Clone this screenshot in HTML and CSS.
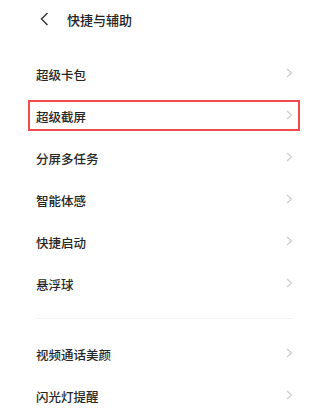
FILE: index.html
```html
<!DOCTYPE html>
<html lang="zh-CN">
<head>
  <meta charset="UTF-8">
  <meta name="viewport" content="width=device-width, initial-scale=1.0">
  <title>快捷与辅助</title>
  <link rel="stylesheet" href="styles.css">
</head>
<body>
  <div class="header">
    <svg class="back" width="9" height="14" viewBox="0 0 9 14">
      <polyline points="7.5,1 1.5,7 7.5,13" fill="none" stroke="#333" stroke-width="1.4"/>
    </svg>
    <span class="title">快捷与辅助</span>
  </div>
  <div class="list">
    <div class="row"><span>超级卡包</span><svg class="arrow" width="7" height="10" viewBox="0 0 7 10"><polyline points="1,1 5.5,5 1,9" fill="none" stroke="#cfcfcf" stroke-width="1.2"/></svg></div>
    <div class="row marked"><span>超级截屏</span><svg class="arrow" width="7" height="10" viewBox="0 0 7 10"><polyline points="1,1 5.5,5 1,9" fill="none" stroke="#cfcfcf" stroke-width="1.2"/></svg></div>
    <div class="row"><span>分屏多任务</span><svg class="arrow" width="7" height="10" viewBox="0 0 7 10"><polyline points="1,1 5.5,5 1,9" fill="none" stroke="#cfcfcf" stroke-width="1.2"/></svg></div>
    <div class="row"><span>智能体感</span><svg class="arrow" width="7" height="10" viewBox="0 0 7 10"><polyline points="1,1 5.5,5 1,9" fill="none" stroke="#cfcfcf" stroke-width="1.2"/></svg></div>
    <div class="row"><span>快捷启动</span><svg class="arrow" width="7" height="10" viewBox="0 0 7 10"><polyline points="1,1 5.5,5 1,9" fill="none" stroke="#cfcfcf" stroke-width="1.2"/></svg></div>
    <div class="row"><span>悬浮球</span><svg class="arrow" width="7" height="10" viewBox="0 0 7 10"><polyline points="1,1 5.5,5 1,9" fill="none" stroke="#cfcfcf" stroke-width="1.2"/></svg></div>
    <div class="divider"></div>
    <div class="row"><span>视频通话美颜</span><svg class="arrow" width="7" height="10" viewBox="0 0 7 10"><polyline points="1,1 5.5,5 1,9" fill="none" stroke="#cfcfcf" stroke-width="1.2"/></svg></div>
    <div class="row"><span>闪光灯提醒</span><svg class="arrow" width="7" height="10" viewBox="0 0 7 10"><polyline points="1,1 5.5,5 1,9" fill="none" stroke="#cfcfcf" stroke-width="1.2"/></svg></div>
  </div>
</body>
</html>
```

FILE: styles.css
```css
body {
  margin: 0;
  background-color: #fff;
  font-family: "Noto Sans CJK SC", "Noto Sans", sans-serif;
  color: #262626;
}
.header {
  display: flex;
  align-items: center;
  height: 38px;
  padding-left: 40px;
}
.back {
  display: block;
}
.title {
  margin-left: 18px;
  font-size: 13px;
  font-weight: 500;
  color: #222;
}
.list {
  margin-top: 15px;
  padding: 0 32px 0 36px;
}
.row {
  position: relative;
  display: flex;
  justify-content: space-between;
  align-items: center;
  height: 42px;
  font-size: 12.5px;
  font-weight: 500;
}
.arrow {
  display: block;
  margin-top: -2px;
}
.marked::after {
  content: "";
  position: absolute;
  left: -8px;
  right: -7px;
  top: 5px;
  bottom: 6px;
  border: 2px solid #f04a4c;
}
.divider {
  height: 1px;
  background-color: #f3f3f3;
  margin: 13px 0 14px;
}
```
